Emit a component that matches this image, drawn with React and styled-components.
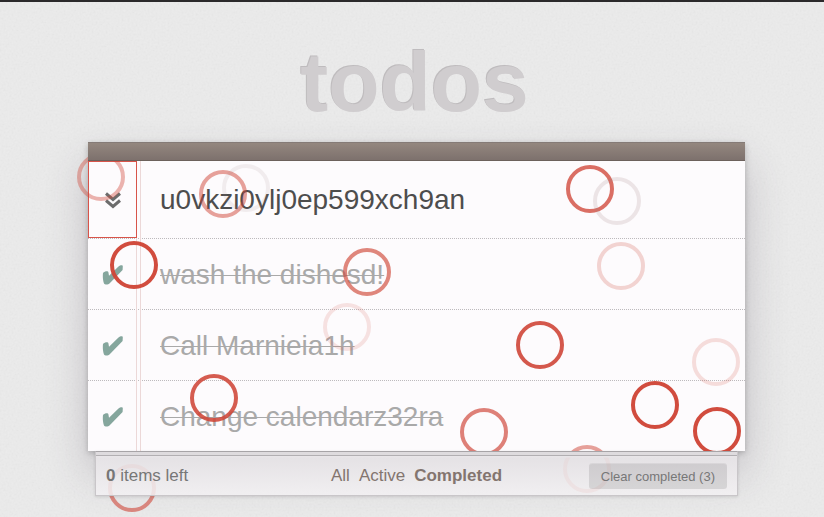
import { useState } from "react";
import styled, { createGlobalStyle } from "styled-components";

const noise = `url("data:image/svg+xml,%3Csvg xmlns='http://www.w3.org/2000/svg' width='200' height='200'%3E%3Cfilter id='n'%3E%3CfeTurbulence type='fractalNoise' baseFrequency='0.5' numOctaves='2' stitchTiles='stitch'/%3E%3CfeColorMatrix type='saturate' values='0'/%3E%3C/filter%3E%3Crect width='200' height='200' filter='url(%23n)' opacity='0.09'/%3E%3C/svg%3E")`;

const GlobalStyle = createGlobalStyle`
  * {
    box-sizing: border-box;
  }
  body {
    margin: 0;
    min-height: 100vh;
    overflow: hidden;
    background: #ebebeb ${noise};
    border-top: 2px solid #2b292b;
    color: #4d4d4d;
    font-family: "Liberation Sans", Arial, sans-serif;
  }
`;

const Page = styled.main`
  padding: 40px 79px 20px 88px;
`;

const Title = styled.h1`
  margin: 0 0 20px;
  padding-right: 4px;
  color: #d0cdcf;
  font-size: 84px;
  line-height: 80px;
  text-align: center;
  text-shadow: -1px -1px 0 #bfbcbe;
`;

const Card = styled.section`
  position: relative;
  background: #fdfbfd;
  box-shadow: 0 2px 6px rgba(0, 0, 0, 0.22), 0 22px 40px rgba(70, 60, 80, 0.24);
  /* the two margin lines of the paper */
  &:before {
    content: "";
    position: absolute;
    top: 0;
    bottom: 0;
    left: 48px;
    width: 3px;
    border: 1px solid #ecd8d8;
    border-width: 0 1px;
  }
`;

const Bar = styled.div`
  position: relative;
  z-index: 3;
  height: 19px;
  background: linear-gradient(#94877f, #7d716d);
  border-top: 1px solid #857b77;
  border-bottom: 1px solid #6c615c;
`;

const InputRow = styled.div`
  display: flex;
  height: 77px;
`;

const ToggleAll = styled.button`
  position: relative;
  width: 49px;
  margin: 0;
  padding: 0;
  border: 1px solid #d8544a;
  background: none;
  display: flex;
  align-items: center;
  justify-content: center;
`;

const NewTodo = styled.input`
  flex: 1;
  min-width: 0;
  padding: 0 20px 0 23px;
  border: 0;
  outline: 0;
  background: none;
  color: #4d4d4d;
  font-family: inherit;
  font-size: 28px;
`;

const List = styled.ul`
  margin: 0;
  padding: 0;
  list-style: none;
`;

const Item = styled.li`
  display: flex;
  align-items: center;
  height: 71px;
  padding-top: 2px;
  border-top: 1px dotted #bdbabd;
`;

const Check = styled.label`
  width: 49px;
  display: flex;
  justify-content: center;
  input {
    appearance: none;
    position: absolute;
    margin: 0;
  }
`;

const Text = styled.span`
  padding-left: 23px;
  font-size: 28px;
  line-height: 34px;
  color: ${(props) => (props.$done ? "#a9a9a9" : "#4d4d4d")};
  text-decoration: ${(props) => (props.$done ? "line-through 1px" : "none")};
`;

const Footer = styled.footer`
  position: relative;
  z-index: 3;
  display: grid;
  grid-template-columns: 1fr auto 1fr;
  align-items: center;
  height: 45px;
  margin: 0 7px;
  padding: 5px 10px 0;
  background: linear-gradient(#e8e5e8 5px, rgba(232, 229, 232, 0.9) 6px, rgba(243, 241, 243, 0.86));
  border: 1px solid #c9c6c9;
  border-top: 1px solid #a7a4a7;
  color: #777;
  font-size: 17px;
  box-shadow: inset 0 3px 0 #dedbde, inset 0 4px 0 #b2afb2, 0 1px 3px rgba(0, 0, 0, 0.12);
`;

const Filters = styled.nav`
  display: flex;
  gap: 9px;
`;

const Filter = styled.a`
  color: #83756f;
  text-decoration: none;
  font-weight: ${(props) => (props.$active ? "bold" : "normal")};
`;

const Clear = styled.button`
  justify-self: end;
  height: 25px;
  padding: 0 12px;
  border: 0;
  border-radius: 3px;
  background: rgba(0, 0, 0, 0.1);
  color: #777;
  font-family: inherit;
  font-size: 13px;
  box-shadow: 0 -1px 0 rgba(0, 0, 0, 0.06);
`;

// touch marks scattered over the whole window
const Marks = styled.div`
  position: absolute;
  inset: 0;
  z-index: 2;
  overflow: hidden;
  pointer-events: none;
`;

const Mark = styled.span`
  position: absolute;
  width: 48px;
  height: 48px;
  margin: -24px 0 0 -24px;
  left: ${(props) => props.$x}px;
  top: ${(props) => props.$y}px;
  border: 4px solid ${(props) => props.$color || "#cf4638"};
  border-radius: 50%;
  opacity: ${(props) => props.$opacity};
`;

const marks = [
  { x: 101, y: 177, opacity: 0.4 },
  { x: 223, y: 194, opacity: 0.5 },
  { x: 246, y: 188, opacity: 0.12, color: "#a08080" },
  { x: 590, y: 189, opacity: 0.78 },
  { x: 617, y: 201, opacity: 0.18, color: "#a08080" },
  { x: 134, y: 265, opacity: 0.97 },
  { x: 367, y: 272, opacity: 0.65 },
  { x: 621, y: 266, opacity: 0.22 },
  { x: 347, y: 327, opacity: 0.14 },
  { x: 540, y: 345, opacity: 0.9 },
  { x: 716, y: 362, opacity: 0.17 },
  { x: 214, y: 398, opacity: 0.88 },
  { x: 655, y: 405, opacity: 0.97 },
  { x: 717, y: 431, opacity: 0.97 },
  { x: 484, y: 432, opacity: 0.68 },
  { x: 587, y: 469, opacity: 0.5 },
  { x: 132, y: 488, opacity: 0.6 },
];

const Chevrons = () => (
  <svg width="16" height="18" viewBox="0 0 16 18" fill="none" stroke="#6c6c6c" strokeWidth="3">
    <path d="M1 2.5 L8 8.5 L15 2.5" />
    <path d="M1 9.5 L8 15.5 L15 9.5" />
  </svg>
);

const Tick = () => (
  <svg width="22" height="20" viewBox="0 0 22 20" fill="#85a69d">
    <path d="M1 8 C2.5 6.3 6 5.6 6.4 7.2 L7 10.8 L16.5 1.6 C18.2 .1 21 -.4 20.8 1.6 L20.6 5 L8 18 C6 20 3 20 2 18.4 C.8 15.5 .6 11 1 8Z" />
  </svg>
);

export default function App() {
  const [text, setText] = useState("u0vkzi0ylj0ep599xch9an");
  const [filter, setFilter] = useState("Completed");
  const [todos, setTodos] = useState([
    { id: 1, title: "wash the dishesd!", done: true },
    { id: 2, title: "Call Marnieia1h", done: true },
    { id: 3, title: "Change calendarz32ra", done: true },
  ]);

  const toggle = (id) => {
    setTodos(todos.map((el) => (el.id === id ? { ...el, done: !el.done } : el)));
  };

  const toggleAll = () => {
    const allDone = todos.every((el) => el.done);
    setTodos(todos.map((el) => ({ ...el, done: !allDone })));
  };

  const left = todos.filter((el) => !el.done).length;
  const shown = todos.filter((el) => filter === "All" || el.done === (filter === "Completed"));

  return (
    <>
      <GlobalStyle />
      <Page>
        <Title>todos</Title>
        <Card>
          <Bar />
          <InputRow>
            <ToggleAll aria-label="Mark all as complete" onClick={toggleAll}>
              <Chevrons />
            </ToggleAll>
            <NewTodo
              aria-label="New todo"
              spellCheck={false}
              value={text}
              onChange={(e) => setText(e.target.value)}
            />
          </InputRow>
          <List>
            {shown.map((el) => (
              <Item key={el.id}>
                <Check>
                  <input
                    type="checkbox"
                    aria-label={el.title}
                    checked={el.done}
                    onChange={() => toggle(el.id)}
                  />
                  {el.done && <Tick />}
                </Check>
                <Text $done={el.done}>{el.title}</Text>
              </Item>
            ))}
          </List>
        </Card>
        <Footer>
          <span>
            <b>{left}</b> items left
          </span>
          <Filters>
            {["All", "Active", "Completed"].map((name) => (
              <Filter key={name} href="#" $active={filter === name} onClick={() => setFilter(name)}>
                {name}
              </Filter>
            ))}
          </Filters>
          <Clear onClick={() => setTodos(todos.filter((el) => !el.done))}>
            Clear completed ({todos.length - left})
          </Clear>
        </Footer>
      </Page>
      <Marks>
        {marks.map((el, i) => (
          <Mark key={i} $x={el.x} $y={el.y} $opacity={el.opacity} $color={el.color} />
        ))}
      </Marks>
    </>
  );
}
